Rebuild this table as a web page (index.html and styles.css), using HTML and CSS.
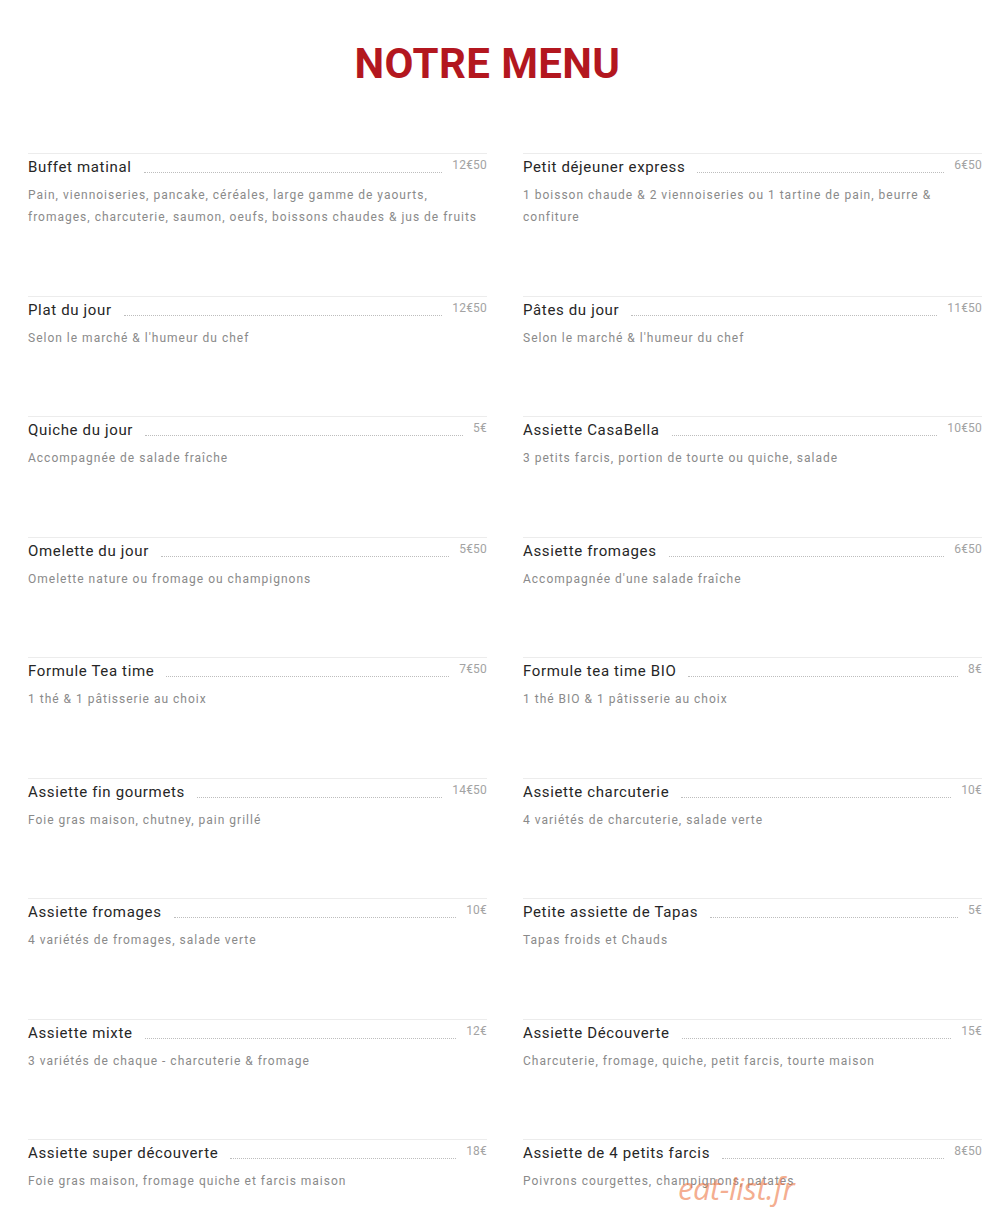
FILE: index.html
```html
<!DOCTYPE html>
<html lang="fr">
<head>
<meta charset="utf-8">
<title>Notre menu</title>
<link rel="stylesheet" href="styles.css">
</head>
<body>
<div class="page">
  <h1 class="heading">NOTRE MENU</h1>
  <div class="menu">
    <div class="item"><div class="row"><span class="name">Buffet matinal</span><span class="leader"></span><span class="price">12€50</span></div><p class="desc">Pain, viennoiseries, pancake, céréales, large gamme de yaourts, fromages, charcuterie, saumon, oeufs, boissons chaudes &amp; jus de fruits</p></div>
    <div class="item"><div class="row"><span class="name">Petit déjeuner express</span><span class="leader"></span><span class="price">6€50</span></div><p class="desc">1 boisson chaude &amp; 2 viennoiseries ou 1 tartine de pain, beurre &amp; confiture</p></div>

    <div class="item"><div class="row"><span class="name">Plat du jour</span><span class="leader"></span><span class="price">12€50</span></div><p class="desc">Selon le marché &amp; l'humeur du chef</p></div>
    <div class="item"><div class="row"><span class="name">Pâtes du jour</span><span class="leader"></span><span class="price">11€50</span></div><p class="desc">Selon le marché &amp; l'humeur du chef</p></div>

    <div class="item"><div class="row"><span class="name">Quiche du jour</span><span class="leader"></span><span class="price">5€</span></div><p class="desc">Accompagnée de salade fraîche</p></div>
    <div class="item"><div class="row"><span class="name">Assiette CasaBella</span><span class="leader"></span><span class="price">10€50</span></div><p class="desc">3 petits farcis, portion de tourte ou quiche, salade</p></div>

    <div class="item"><div class="row"><span class="name">Omelette du jour</span><span class="leader"></span><span class="price">5€50</span></div><p class="desc">Omelette nature ou fromage ou champignons</p></div>
    <div class="item"><div class="row"><span class="name">Assiette fromages</span><span class="leader"></span><span class="price">6€50</span></div><p class="desc">Accompagnée d'une salade fraîche</p></div>

    <div class="item"><div class="row"><span class="name">Formule Tea time</span><span class="leader"></span><span class="price">7€50</span></div><p class="desc">1 thé &amp; 1 pâtisserie au choix</p></div>
    <div class="item"><div class="row"><span class="name">Formule tea time BIO</span><span class="leader"></span><span class="price">8€</span></div><p class="desc">1 thé BIO &amp; 1 pâtisserie au choix</p></div>

    <div class="item"><div class="row"><span class="name">Assiette fin gourmets</span><span class="leader"></span><span class="price">14€50</span></div><p class="desc">Foie gras maison, chutney, pain grillé</p></div>
    <div class="item"><div class="row"><span class="name">Assiette charcuterie</span><span class="leader"></span><span class="price">10€</span></div><p class="desc">4 variétés de charcuterie, salade verte</p></div>

    <div class="item"><div class="row"><span class="name">Assiette fromages</span><span class="leader"></span><span class="price">10€</span></div><p class="desc">4 variétés de fromages, salade verte</p></div>
    <div class="item"><div class="row"><span class="name">Petite assiette de Tapas</span><span class="leader"></span><span class="price">5€</span></div><p class="desc">Tapas froids et Chauds</p></div>

    <div class="item"><div class="row"><span class="name">Assiette mixte</span><span class="leader"></span><span class="price">12€</span></div><p class="desc">3 variétés de chaque - charcuterie &amp; fromage</p></div>
    <div class="item"><div class="row"><span class="name">Assiette Découverte</span><span class="leader"></span><span class="price">15€</span></div><p class="desc">Charcuterie, fromage, quiche, petit farcis, tourte maison</p></div>

    <div class="item"><div class="row"><span class="name">Assiette super découverte</span><span class="leader"></span><span class="price">18€</span></div><p class="desc">Foie gras maison, fromage quiche et farcis maison</p></div>
    <div class="item"><div class="row"><span class="name">Assiette de 4 petits farcis</span><span class="leader"></span><span class="price">8€50</span></div><p class="desc">Poivrons courgettes, champignons, patates</p></div>
  </div>
  <div class="watermark">eat-list.fr</div>
</div>
</body>
</html>
```

FILE: styles.css
```css
html, body {
  margin: 0;
  padding: 0;
  background: #ffffff;
}

body {
  font-family: Roboto, "Liberation Sans", Arial, sans-serif;
}

.page {
  position: relative;
  width: 989px;
  min-height: 1230px;
}

.heading {
  margin: 0;
  padding-top: 40px;
  width: 975px;
  text-align: center;
  font-size: 42px;
  line-height: 48px;
  font-weight: 700;
  color: #b3171f;
  letter-spacing: 0.4px;
}

.menu {
  display: grid;
  grid-template-columns: 459px 459px;
  column-gap: 36px;
  margin: 65px 0 0 28px;
}

.item {
  border-top: 1px solid #ececec;
  padding: 3px 0 67.5px;
}

.row {
  display: flex;
  align-items: flex-start;
}

.name {
  font-size: 15px;
  line-height: 20px;
  color: #262626;
  letter-spacing: 0.65px;
  white-space: nowrap;
}

.leader {
  flex: 1;
  height: 15px;
  border-bottom: 1px dotted #bdbdbd;
  margin: 0 10px 0 12px;
}

.price {
  font-size: 12px;
  line-height: 16px;
  color: #a3a3a3;
  letter-spacing: 0.2px;
}

.desc {
  margin: 7px 0 0;
  font-size: 12px;
  line-height: 22px;
  letter-spacing: 1px;
  color: #8a8a8a;
}

.watermark {
  position: absolute;
  left: 678px;
  top: 1170px;
  font-family: "Open Sans", "DejaVu Sans", sans-serif;
  font-style: italic;
  font-size: 31px;
  line-height: 36px;
  color: rgba(238, 120, 70, 0.6);
  letter-spacing: -0.5px;
}
```
